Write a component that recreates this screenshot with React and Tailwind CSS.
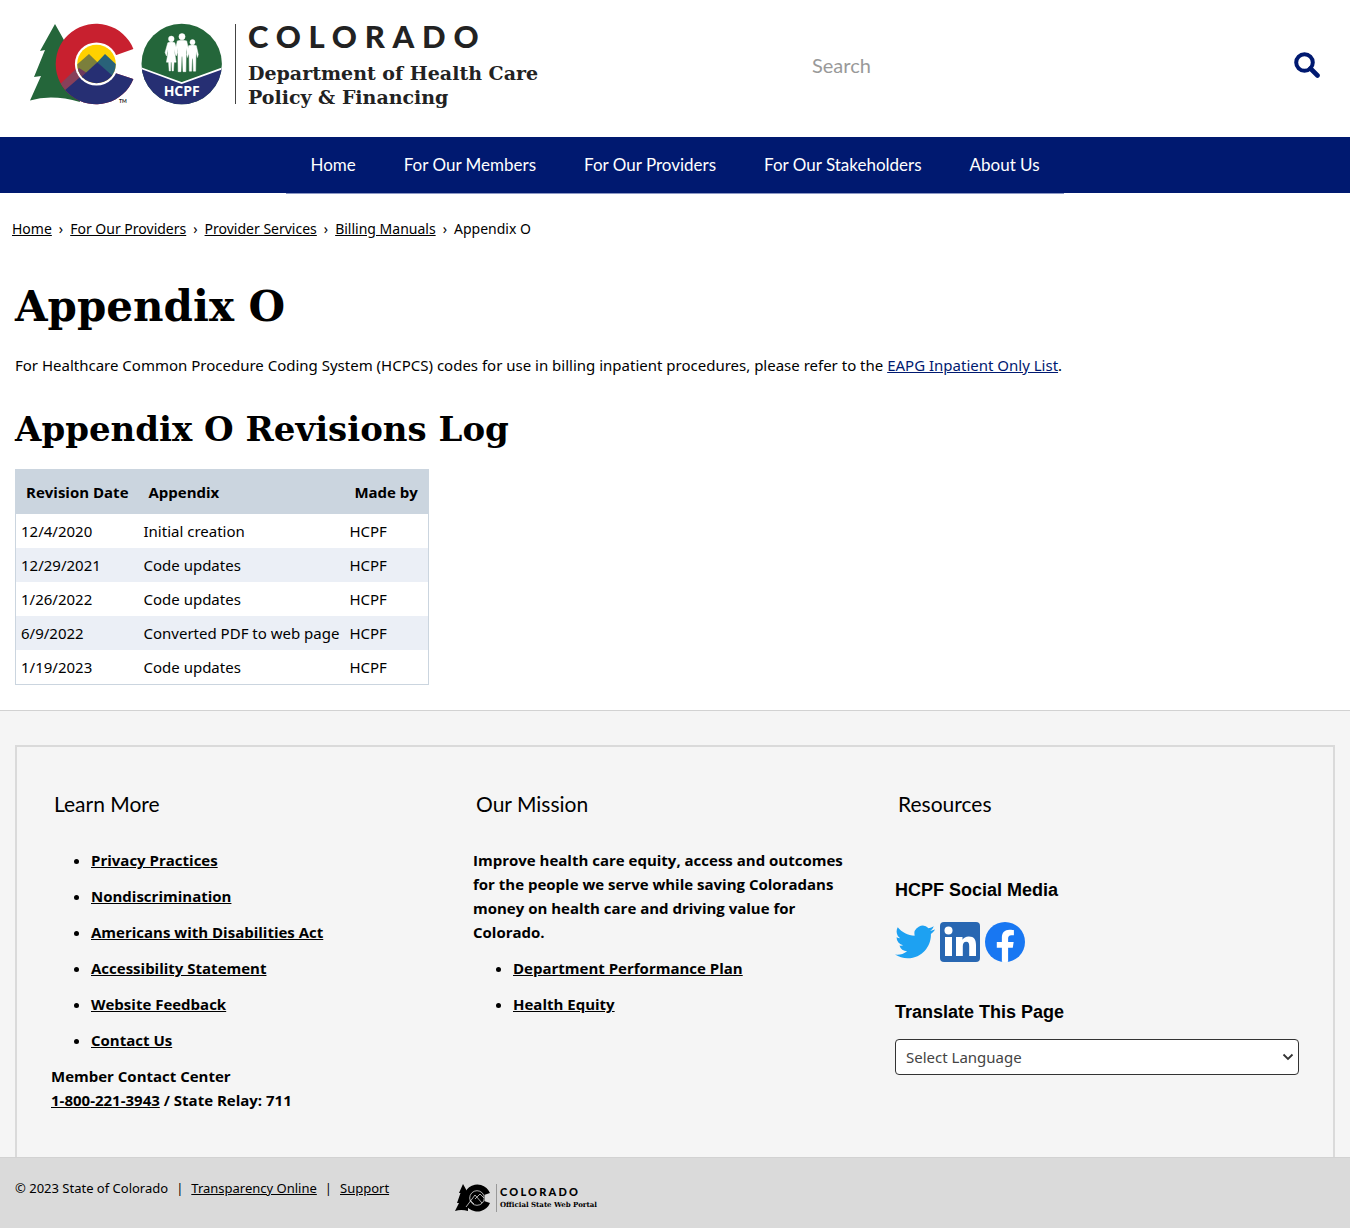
import React from "react";

const body = "font-['Noto_Sans','Open_Sans',sans-serif]";
const strong = "font-['Open_Sans','Noto_Sans',sans-serif]";
const sans = "font-['Lato','Noto_Sans',sans-serif]";
const slab = "font-['DejaVu_Serif',serif]";

const navItems = ["Home", "For Our Members", "For Our Providers", "For Our Stakeholders", "About Us"];
const crumbs = ["Home", "For Our Providers", "Provider Services", "Billing Manuals"];
const revisions = [
  ["12/4/2020", "Initial creation", "HCPF"],
  ["12/29/2021", "Code updates", "HCPF"],
  ["1/26/2022", "Code updates", "HCPF"],
  ["6/9/2022", "Converted PDF to web page", "HCPF"],
  ["1/19/2023", "Code updates", "HCPF"],
];
const learnMore = [
  "Privacy Practices",
  "Nondiscrimination",
  "Americans with Disabilities Act",
  "Accessibility Statement",
  "Website Feedback",
  "Contact Us",
];
const mission = ["Department Performance Plan", "Health Equity"];

function Person({ x, y, s, skirt }) {
  return (
    <g transform={`translate(${x} ${y}) scale(${s})`} fill="#fff" stroke="#fff" strokeWidth=".5" strokeLinejoin="round">
      <circle cx="0" cy="3" r="2.9" />
      {skirt ? (
        <path d="M-3.6 7 Q0 5.6 3.6 7 L6.4 17 L5 20.5 L3.4 14 L3.4 17 L5 27 H2.8 L2.2 36 H.8 L.5 27 H-.5 L-.8 36 H-2.2 L-2.8 27 H-5 L-3.4 17 V14 L-5 20.5 L-6.4 17 Z" />
      ) : (
        <path d="M-4.4 7 Q0 5.6 4.4 7 L6.6 17 L5.6 20.5 L4 14 L3.6 36 H1 L.5 22 H-.5 L-1 36 H-3.6 L-4 14 L-5.6 20.5 L-6.6 17 Z" />
      )}
    </g>
  );
}

function StateLogo() {
  return (
    <svg viewBox="30 23 193 83" className="h-[83px] w-[193px] shrink-0" role="img" aria-label="Colorado and HCPF emblems">
      <defs>
        <clipPath id="peaks"><circle cx="96.5" cy="64" r="19.3" /></clipPath>
        <clipPath id="letter">
          <path d="M133.4 49 A40.3 40.3 0 1 0 133.4 79 L115 73 A20 20 0 1 1 115 55.500 Z" />
        </clipPath>
        <clipPath id="seal"><circle cx="181.7" cy="64" r="40.2" /></clipPath>
      </defs>
      <path fill="#24663a" d="M55 24 L69 49 L80 102 Q52 94 30 100.5 L41 76 L34 77 L45 50 L40 51 Z" />
      <g clipPath="url(#letter)">
        <rect x="50" y="20" width="90" height="90" fill="#c8202f" />
        <path fill="#87405a" d="M56 88 L78 67 L92 78 L68 98 Z" />
        <path fill="#24663a" d="M50 84 L60 84 L66 91 L62 102 H50 Z" opacity=".6" />
        <path fill="#262f73" d="M64 91 L86 72 L100 64 L115 70 L140 82 V110 H74 Z" />
      </g>
      <circle cx="96.5" cy="64" r="21.6" fill="#fff" />
      <g clipPath="url(#peaks)">
        <rect x="70" y="40" width="55" height="50" fill="#ffd100" />
        <path fill="#7b7f3c" d="M72 69 L89 54 L97.500 62.300 L80 80 L72 80 Z" />
        <path fill="#296279" d="M97 62.500 L105 54 L120 68 V80 L112 77 Z" />
        <path fill="#6d3a5d" d="M73 74 L79 68 L87 73 L80 81 Z" />
        <path fill="#262f73" d="M76 82 L97.300 62.300 L116 79 L108 90 H84 Z" />
      </g>
      <text x="119" y="103" fontSize="5" fontWeight="700" fill="#222" fontFamily="Lato, sans-serif">TM</text>
      <g clipPath="url(#seal)">
        <rect x="140" y="22" width="84" height="84" fill="#24663a" />
        <path fill="#262f73" d="M140 67.6 L181.7 83 L224 67.6 V106 H140 Z" />
        <path fill="none" stroke="#fff" strokeWidth="1.8" d="M140 67.8 L181.7 83 L224 67.8" />
      </g>
      <Person x={171.3} y={36} s={0.97} skirt />
      <Person x={182} y={33.5} s={1.06} />
      <Person x={192.5} y={39.5} s={0.88} />
      <text x="181.7" y="96" textAnchor="middle" fontSize="14" fontWeight="700" fill="#fff" fontFamily="Open Sans, sans-serif">HCPF</text>
    </svg>
  );
}

function PortalMark() {
  return (
    <svg viewBox="0 0 36 28" className="h-7 w-9 shrink-0" aria-hidden="true">
      <path d="M8 0 L13 9 L13 27 Q6 25 0 27 L4 19 L2 19 L5.500 9 L4 9 Z" />
      <path d="M35 9 A13.600 13.600 0 1 0 35 19 L29 17 A7 7 0 1 1 29 11 Z" />
      <circle cx="22" cy="14" r="8" />
      <circle cx="22" cy="14" r="7.300" fill="none" stroke="#dadada" strokeWidth=".8" />
      <path d="M11 23 L20 11 L27 19 M20 15 L25 10 L29 14 M15 16 L19 20" fill="none" stroke="#dadada" strokeWidth=".8" />
    </svg>
  );
}

function Bird() {
  return (
    <svg viewBox="0 0 24 24" className="size-10" fill="#1da1f2" aria-hidden="true">
      <path d="M23.950 4.570a10 10 0 0 1-2.820.770 4.960 4.960 0 0 0 2.160-2.720c-.950.550-2 .960-3.130 1.180a4.920 4.920 0 0 0-8.380 4.480C7.690 8.090 4.070 6.130 1.640 3.160a4.820 4.820 0 0 0-.670 2.480c0 1.710.870 3.210 2.190 4.100a4.900 4.900 0 0 1-2.230-.620v.060a4.920 4.920 0 0 0 3.950 4.830 5 5 0 0 1-2.210.080 4.940 4.940 0 0 0 4.600 3.420A9.870 9.870 0 0 1 0 19.540a13.990 13.990 0 0 0 7.550 2.210c9.050 0 14-7.500 14-13.980 0-.210 0-.420-.020-.630a9.940 9.940 0 0 0 2.460-2.550z" />
    </svg>
  );
}

function LinkedIn() {
  return (
    <svg viewBox="0 0 40 40" className="size-10" aria-hidden="true">
      <rect width="40" height="40" rx="4" fill="#2867b2" />
      <g fill="#fff">
        <circle cx="8.500" cy="8.500" r="4" />
        <path d="M5 15h7v19H5zM16 15h6.500v2.800c1-1.900 3.300-3.300 6.300-3.300 5.500 0 7.200 3.400 7.200 8.600V34h-6.800v-9.800c0-2.600-.5-4.400-2.900-4.400-2.500 0-3.500 1.900-3.500 4.500V34H16z" />
      </g>
    </svg>
  );
}

function Facebook() {
  return (
    <svg viewBox="0 0 24 24" className="size-10" aria-hidden="true">
      <circle cx="12" cy="12" r="12" fill="#1877f2" />
      <path fill="#fff" d="M16.670 15.470l.530-3.470h-3.330V9.750c0-.950.470-1.870 1.960-1.870h1.510V4.920s-1.370-.230-2.690-.230c-2.740 0-4.530 1.660-4.530 4.670V12H7.080v3.470h3.040V23.850a12.100 12.100 0 0 0 3.750 0v-8.380z" />
    </svg>
  );
}

function BulletLinks({ items }) {
  return (
    <ul className="list-disc pl-10">
      {items.map((t) => (
        <li key={t} className="pb-3"><a href="#" className="underline">{t}</a></li>
      ))}
    </ul>
  );
}

export default function App() {
  return (
    <div className={`${body} bg-white text-[15px] leading-6 text-black`}>
      <header className={`${sans} flex items-start justify-between px-[30px] pb-7 pt-[23px]`}>
        <a href="#" className="flex items-start text-[#222]">
          <StateLogo />
          <span className="ml-3 mt-px h-20 w-px bg-[#444]" />
          <span className="pl-3">
            <span className="block text-[31px] font-black leading-[26px] tracking-[0.25em]">COLORADO</span>
            <span className={`${slab} mt-3 block text-[19px] font-bold leading-6`}>
              Department of Health Care<br />Policy &amp; Financing
            </span>
          </span>
        </a>
        <form className="mt-7 flex w-2/5 items-center" onSubmit={(e) => e.preventDefault()}>
          <input type="text" aria-label="Search" placeholder="Search" className="min-w-0 flex-1 bg-transparent px-2 text-xl outline-none placeholder:text-[#999]" />
          <button type="submit" aria-label="Submit search" className="text-[#001970]">
            <svg viewBox="0 0 26 26" className="size-[26px]" fill="none" stroke="currentColor">
              <circle cx="10.500" cy="10.500" r="8.300" strokeWidth="4" />
              <path d="M16.500 16.500 L23.500 23.500" strokeWidth="4.600" strokeLinecap="round" />
            </svg>
          </button>
        </form>
      </header>

      <nav className={`${sans} flex h-14 justify-center bg-[#001970] text-[17px] text-white`}>
        <ul className="flex items-center shadow-[0_1px_0_#8c98c4]">
          {navItems.map((t) => (
            <li key={t}><a href="#" className="px-6">{t}</a></li>
          ))}
        </ul>
      </nav>

      <main className="pb-[25px]">
        <nav aria-label="Breadcrumb" className="px-3 pt-6 text-sm leading-6">
          <ol className="flex">
            {crumbs.map((t) => (
              <li key={t}><a href="#" className="underline">{t}</a><span className="px-[7px]">›</span></li>
            ))}
            <li>Appendix O</li>
          </ol>
        </nav>
        <div className="px-[15px]">
          <h1 className={`${slab} mt-[38px] text-[42px] font-bold leading-[56px]`}>Appendix O</h1>
          <p className="mt-[18px]">
            For Healthcare Common Procedure Coding System (HCPCS) codes for use in billing inpatient procedures, please refer to the{" "}
            <a href="#" className="text-[#001970] underline">EAPG Inpatient Only List</a>.
          </p>
          <h2 className={`${slab} mt-7 text-[34px] font-bold leading-[48px]`}>Appendix O Revisions Log</h2>
          <table className="mt-4 border-collapse border border-[#cbd5df] text-left">
            <thead className={`${strong} bg-[#cbd5df]`}>
              <tr>
                <th className="px-[10px] py-[10px]">Revision Date</th>
                <th className="px-[10px] py-[10px]">Appendix</th>
                <th className="px-[10px] py-[10px]">Made by</th>
              </tr>
            </thead>
            <tbody>
              {revisions.map((row) => (
                <tr key={row[0]} className="even:bg-[#ebeff6]">
                  {row.map((c) => <td key={c} className="px-[5px] py-[5px]">{c}</td>)}
                </tr>
              ))}
            </tbody>
          </table>
        </div>
      </main>

      <footer>
        <div className="border-t border-[#d2d2d2] bg-[#f5f5f5] px-[15px] pt-[34px]">
          <div className={`${strong} grid grid-cols-3 border-2 border-b-0 border-[#dadada] pb-[45px] pl-[34px] pr-4 pt-[43px] font-bold`}>
            <section>
              <h3 className={`${sans} pl-[3px] text-[21px] font-normal leading-7`}>Learn More</h3>
              <div className="mt-[30px]">
                <BulletLinks items={learnMore} />
                <p>Member Contact Center<br /><a href="#" className="underline">1-800-221-3943</a> / State Relay: 711</p>
              </div>
            </section>
            <section>
              <h3 className={`${sans} pl-[3px] text-[21px] font-normal leading-7`}>Our Mission</h3>
              <p className="mb-3 mt-[30px] pr-[50px]">
                Improve health care equity, access and outcomes for the people we serve while saving Coloradans money on health care and driving value for Colorado.
              </p>
              <BulletLinks items={mission} />
            </section>
            <section className="pr-[18px]">
              <h3 className={`${sans} pl-[3px] text-[21px] font-normal leading-7`}>Resources</h3>
              <h4 className="mt-[60px] font-['Liberation_Sans',sans-serif] text-lg leading-6">HCPF Social Media</h4>
              <div className="mt-5 flex gap-[5px]">
                <a href="#" aria-label="Twitter"><Bird /></a>
                <a href="#" aria-label="LinkedIn"><LinkedIn /></a>
                <a href="#" aria-label="Facebook"><Facebook /></a>
              </div>
              <label htmlFor="language" className="mt-[38px] block font-['Liberation_Sans',sans-serif] text-lg leading-6">Translate This Page</label>
              <div className={`${body} relative mt-[15px] font-normal`}>
                <select id="language" className="h-9 w-full appearance-none rounded border border-[#333] bg-white px-[10px] text-[15px] text-[#444]">
                  <option>Select Language</option>
                </select>
                <svg viewBox="0 0 12 8" className="pointer-events-none absolute right-[5px] top-3.5 h-2 w-3" fill="none" stroke="#333" strokeWidth="1.800">
                  <path d="M1.500 1.500 L6 6 L10.500 1.500" />
                </svg>
              </div>
            </section>
          </div>
        </div>
        <div className="flex items-start border-t border-[#d2d2d2] bg-[#dadada] px-[15px] pb-4 pt-[18px]">
          <p className="w-[440px] text-[13px] leading-6">
            © 2023 State of Colorado<span className="px-2">|</span>
            <a href="#" className="underline">Transparency Online</a><span className="px-2">|</span>
            <a href="#" className="underline">Support</a>
          </p>
          <a href="#" className={`${sans} mt-2 flex`}>
            <PortalMark />
            <span className="ml-[5px] border-l border-[#999] pl-[3px]">
              <span className="block text-[11px] font-black leading-4 tracking-[0.2em]">COLORADO</span>
              <span className={`${slab} block text-[7px] font-bold leading-[10px]`}>Official State Web Portal</span>
            </span>
          </a>
        </div>
      </footer>
    </div>
  );
}
